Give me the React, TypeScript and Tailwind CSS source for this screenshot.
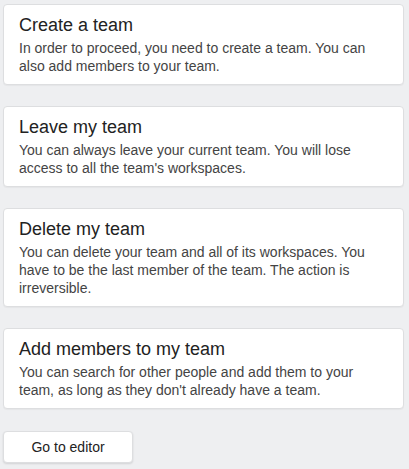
import React from 'react';

interface Step {
  title: string;
  text: string;
}

const steps: Step[] = [
  {
    title: 'Create a team',
    text: 'In order to proceed, you need to create a team. You can also add members to your team.',
  },
  {
    title: 'Leave my team',
    text: "You can always leave your current team. You will lose access to all the team's workspaces.",
  },
  {
    title: 'Delete my team',
    text: 'You can delete your team and all of its workspaces. You have to be the last member of the team. The action is irreversible.',
  },
  {
    title: 'Add members to my team',
    text: "You can search for other people and add them to your team, as long as they don't already have a team.",
  },
];

const App: React.FC = () => {
  return (
    <div
      className="min-h-screen bg-[#eeeff1] pl-[3px] pr-[5px] pt-[4px] pb-2"
      style={{ fontFamily: '"Liberation Sans", Arial, sans-serif' }}
    >
      <div className="flex flex-col gap-[21px]">
        {steps.map((step) => (
          <div
            key={step.title}
            className="bg-white border border-[#dddee0] rounded-[4px] px-[15px] pt-[10px] pb-[9px] shadow-[0_1px_1px_rgba(0,0,0,0.04)]"
          >
            <h2 className="text-[18px] leading-[20px] text-[#222]">{step.title}</h2>
            <p className="mt-[4px] text-[14px] leading-[18px] text-[#444]">{step.text}</p>
          </div>
        ))}
      </div>
      <button className="mt-[22px] w-[130px] h-[32px] bg-white border border-[#dddee0] rounded-[4px] text-[14px] text-[#222] shadow-[0_1px_2px_rgba(0,0,0,0.12)]">
        Go to editor
      </button>
    </div>
  );
};

export default App;
